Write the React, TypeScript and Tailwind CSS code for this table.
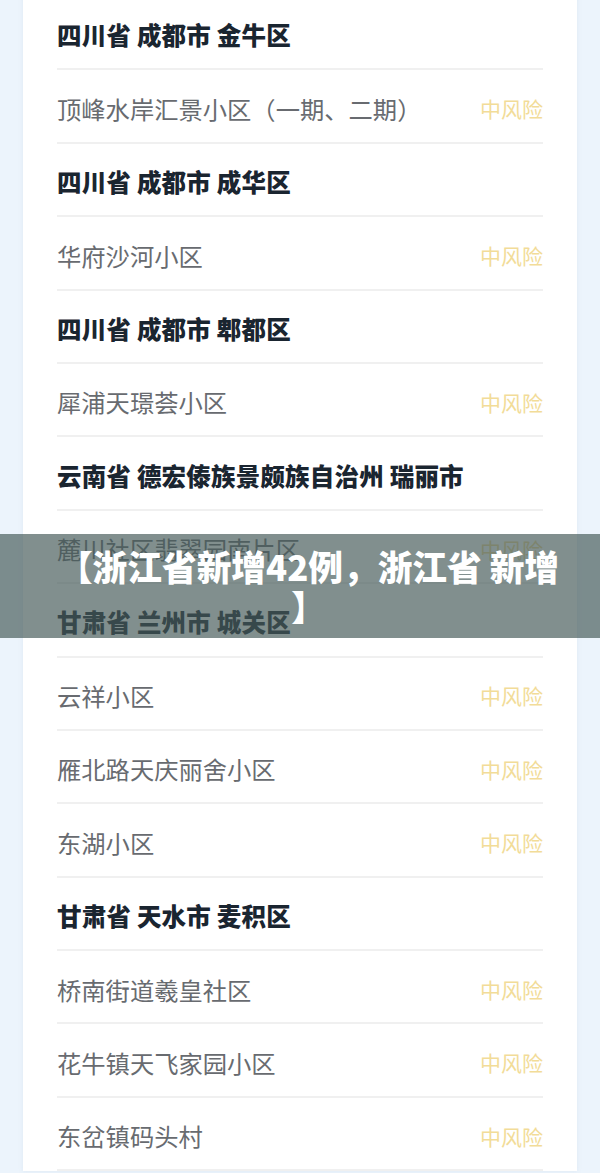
import React from "react";

type Row = { t: "h" | "r"; text: string };

const rows: Row[] = [
  { t: "h", text: "四川省 成都市 金牛区" },
  { t: "r", text: "顶峰水岸汇景小区（一期、二期）" },
  { t: "h", text: "四川省 成都市 成华区" },
  { t: "r", text: "华府沙河小区" },
  { t: "h", text: "四川省 成都市 郫都区" },
  { t: "r", text: "犀浦天璟荟小区" },
  { t: "h", text: "云南省 德宏傣族景颇族自治州 瑞丽市" },
  { t: "r", text: "麓川社区翡翠园南片区" },
  { t: "h", text: "甘肃省 兰州市 城关区" },
  { t: "r", text: "云祥小区" },
  { t: "r", text: "雁北路天庆丽舍小区" },
  { t: "r", text: "东湖小区" },
  { t: "h", text: "甘肃省 天水市 麦积区" },
  { t: "r", text: "桥南街道羲皇社区" },
  { t: "r", text: "花牛镇天飞家园小区" },
  { t: "r", text: "东岔镇码头村" },
];

export default function App() {
  return (
    <div
      className="relative w-[600px] h-[1173px] overflow-hidden bg-[#ecf4fc]"
      style={{ fontFamily: '"Noto Sans CJK SC", "Noto Sans", sans-serif' }}
    >
      <div className="mx-[23px] mt-[-3px] bg-white pl-[34px] pr-[34px] shadow-[0_0_4px_rgba(180,200,220,0.25)]">
        {rows.map((r, i) => (
          <div
            key={i}
            className="flex h-[73.4px] items-center justify-between border-b-2 border-[#f0f0f0] pt-[6px]"
          >
            {r.t === "h" ? (
              <span className="text-[24.5px] font-black tracking-[0.2px] text-[#1a2530]">{r.text}</span>
            ) : (
              <>
                <span className="text-[24.3px] text-[#686b70]">{r.text}</span>
                <span className="text-[21px] text-[#f2dc98]">中风险</span>
              </>
            )}
          </div>
        ))}
      </div>

      <div className="absolute left-0 top-[534px] flex h-[104px] w-[600px] flex-col items-center justify-center bg-[rgba(70,90,88,0.68)] pl-[17px] text-center text-[34.7px] font-black leading-[40px] text-white">
        <div className="whitespace-nowrap">【浙江省新增42例，浙江省 新增</div>
        <div>】</div>
      </div>
    </div>
  );
}
